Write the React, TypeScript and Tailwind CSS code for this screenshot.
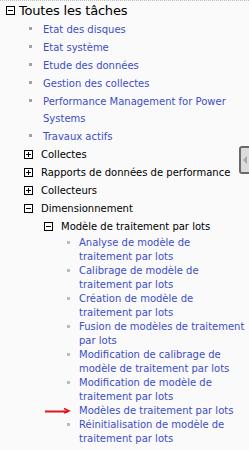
import React from "react";

const font = { fontFamily: '"DejaVu Sans", Verdana, sans-serif' };

function Box({ plus }: { plus?: boolean }) {
  return (
    <span className="relative inline-block w-[9px] h-[9px] border border-black bg-white shrink-0">
      <span className="absolute left-[1px] top-[3px] w-[5px] h-[1px] bg-black" />
      {plus && <span className="absolute left-[3px] top-[1px] w-[1px] h-[5px] bg-black" />}
    </span>
  );
}

function TopItem({ lines }: { lines: string[] }) {
  return (
    <div className="flex items-start pl-[29px] mb-[1px]">
      <span className="w-[14px] shrink-0 pt-[6px]">
        <span className="block w-[3px] h-[3px] bg-[#a2a2a2]" />
      </span>
      <span className="text-[10px] leading-[17px] text-[#3d4ec6]">
        {lines.map((l, i) => (
          <span key={i} className="block whitespace-nowrap">{l}</span>
        ))}
      </span>
    </div>
  );
}

function Group({ label, plus }: { label: string; plus?: boolean }) {
  return (
    <div className="flex items-center pl-[24px] h-[17px] mb-[1px]">
      <Box plus={plus} />
      <span className="ml-[8px] text-[10px] text-black whitespace-nowrap">{label}</span>
    </div>
  );
}

function SubItem({ lines, arrow }: { lines: string[]; arrow?: boolean }) {
  return (
    <div className="relative flex items-start pl-[67px]">
      {arrow ? (
        <svg className="absolute left-[45px] top-[3px]" width="26" height="7" viewBox="0 0 26 7">
          <path d="M0 4.5 H23" stroke="#e0141c" strokeWidth="2" fill="none" />
          <path d="M19 1.5 L24 4 L19 6" stroke="#e0141c" strokeWidth="1.6" fill="none" />
        </svg>
      ) : null}
      <span className="w-[12px] shrink-0 pt-[5px]">
        {!arrow && <span className="block w-[3px] h-[3px] bg-[#bdbdbd]" />}
      </span>
      <span className="text-[10px] leading-[14px] text-[#3d4ec6]">
        {lines.map((l, i) => (
          <span key={i} className="block whitespace-nowrap">{l}</span>
        ))}
      </span>
    </div>
  );
}

export default function App() {
  return (
    <div
      className="relative w-[249px] h-[450px] overflow-hidden bg-[#fafafa] border-t border-dotted border-[#bdbdbd]"
      style={font}
    >
      <div className="flex items-center pl-[6px] h-[19px]">
        <Box />
        <span className="ml-[4px] text-[13px] tracking-[-0.2px] text-black whitespace-nowrap leading-[19px]">
          Toutes les tâches
        </span>
      </div>

      <div className="pt-[1px]">
        <TopItem lines={["Etat des disques"]} />
        <TopItem lines={["Etat système"]} />
        <TopItem lines={["Etude des données"]} />
        <TopItem lines={["Gestion des collectes"]} />
        <TopItem lines={["Performance Management for Power", "Systems"]} />
        <TopItem lines={["Travaux actifs"]} />
      </div>

      <Group label="Collectes" plus />
      <Group label="Rapports de données de performance" plus />
      <Group label="Collecteurs" plus />
      <Group label="Dimensionnement" />

      <div className="flex items-center pl-[44px] h-[17px] mt-[1px]">
        <Box />
        <span className="ml-[8px] text-[10px] text-black whitespace-nowrap">
          Modèle de traitement par lots
        </span>
      </div>

      <div className="pt-[1px]">
        <SubItem lines={["Analyse de modèle de", "traitement par lots"]} />
        <SubItem lines={["Calibrage de modèle de", "traitement par lots"]} />
        <SubItem lines={["Création de modèle de", "traitement par lots"]} />
        <SubItem lines={["Fusion de modèles de traitement", "par lots"]} />
        <SubItem lines={["Modification de calibrage de", "modèle de traitement par lots"]} />
        <SubItem lines={["Modification de modèle de", "traitement par lots"]} />
        <SubItem lines={["Modèles de traitement par lots"]} arrow />
        <SubItem lines={["Réinitialisation de modèle de", "traitement par lots"]} />
      </div>

      <div className="absolute left-[239px] top-[145px] w-[14px] h-[28px] rounded-[3px] border-2 border-[#6a6a6a] bg-[#dcdcdc] flex items-center pl-[2px]">
        <span className="block w-0 h-0 border-y-[4px] border-y-transparent border-r-[4px] border-r-[#a8a8a8]" />
      </div>
    </div>
  );
}
